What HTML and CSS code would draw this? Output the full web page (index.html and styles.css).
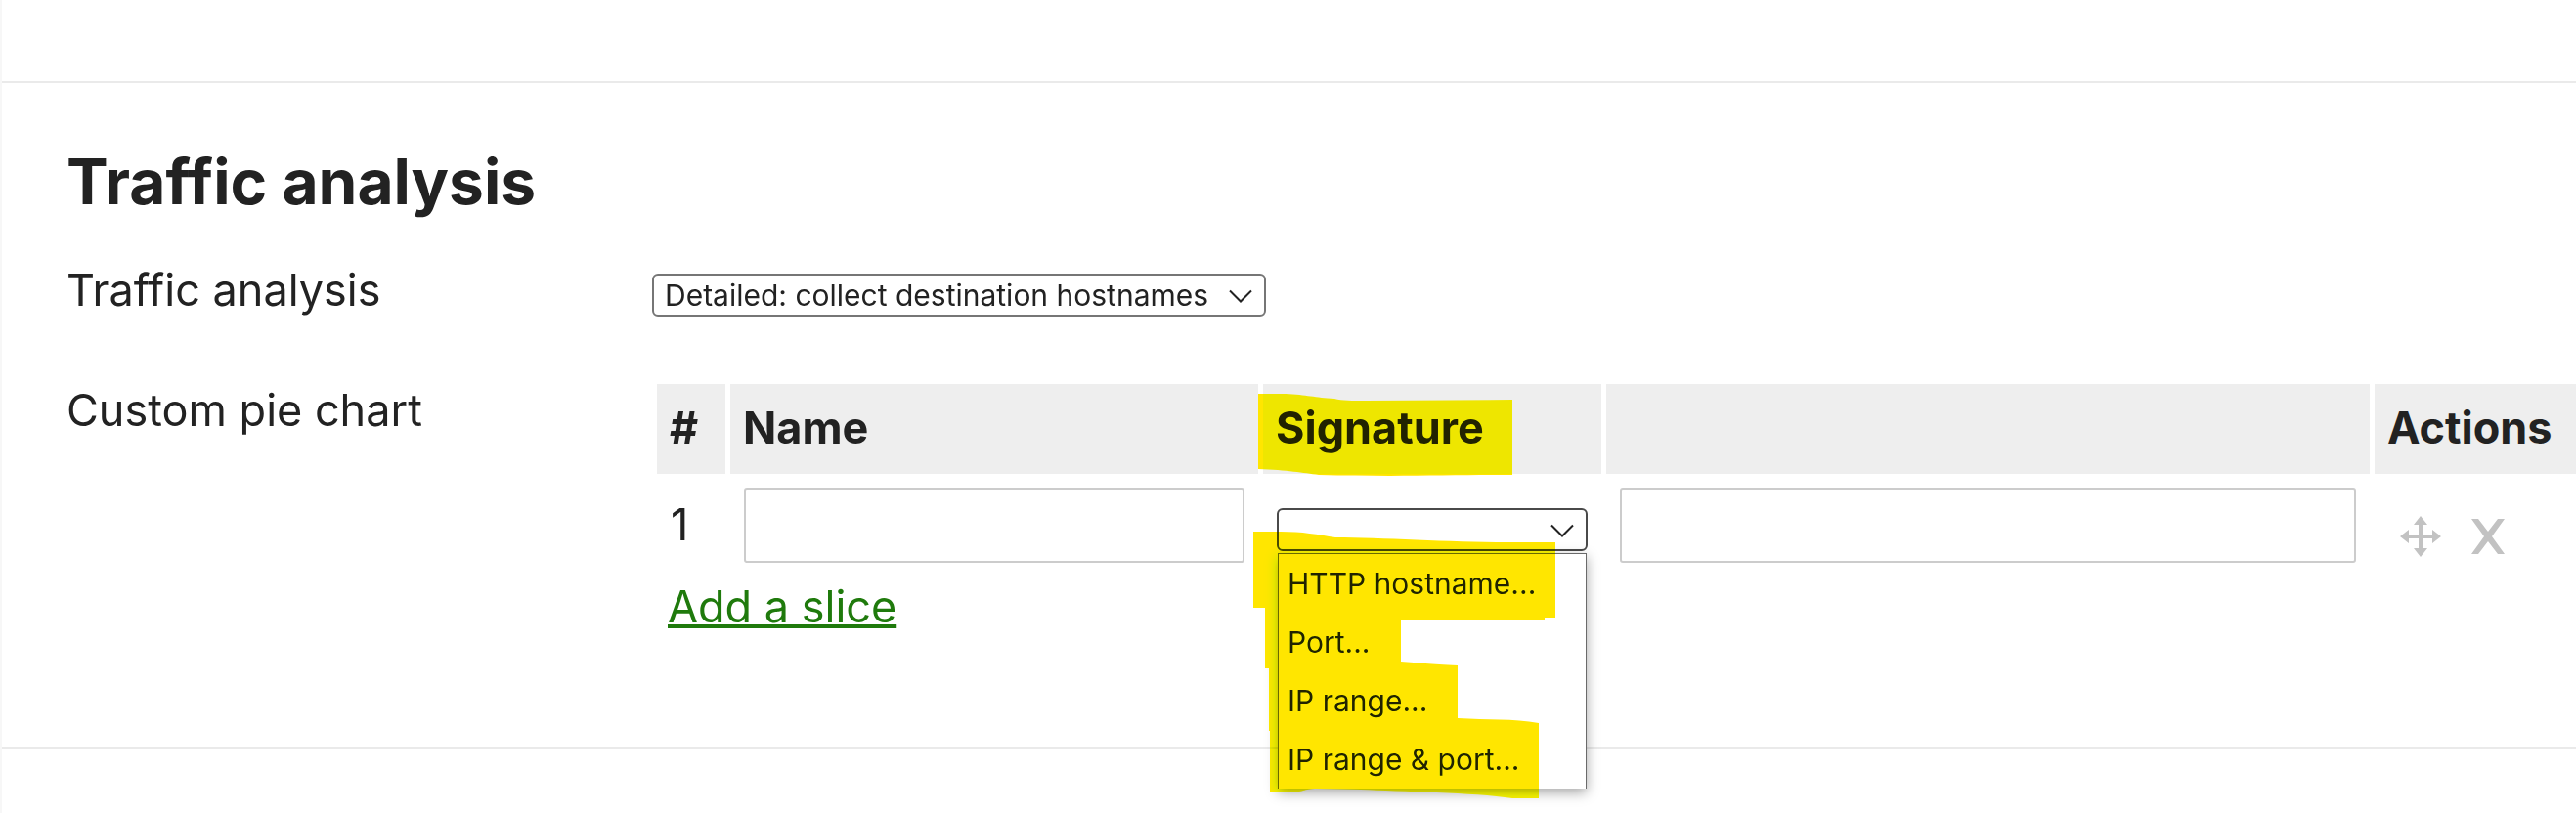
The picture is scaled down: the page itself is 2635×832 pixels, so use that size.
FILE: index.html
```html
<!DOCTYPE html>
<html lang="en">
<head>
    <meta charset="UTF-8">
    <meta name="viewport" content="width=device-width, initial-scale=1.0">
    <title>Traffic analysis</title>
    <link rel="stylesheet" href="styles.css">
</head>
<body>
    <main class="settings">
        <div class="section-previous"></div>

        <section class="section">
            <h2>Traffic analysis</h2>

            <div class="form-row form-row-inline">
                <label for="analysis-mode">Traffic analysis</label>
                <div>
                    <span class="select-box">
                        <select id="analysis-mode">
                            <option>Detailed: collect destination hostnames</option>
                        </select>
                        <svg class="chevron" viewBox="0 0 26 14" aria-hidden="true"><path d="M2 1.5 L13 12.5 L24 1.5"/></svg>
                    </span>
                </div>
            </div>

            <div class="form-row">
                <div class="row-label" id="pie-label">Custom pie chart</div>
                <div>
                    <table class="slices" aria-labelledby="pie-label">
                        <thead>
                            <tr>
                                <th class="col-number">#</th>
                                <th class="col-name">Name</th>
                                <th class="col-signature">
                                    Signature
                                    <svg class="marker marker-title" viewBox="0 0 260 84" aria-hidden="true">
                                        <path d="M0 0 H28 C50 1 58 4 78 5 C86 7 96 7 110 7 L260 6 V83 C200 83 140 85 62 83 C46 81 30 78 0 77 Z"/>
                                    </svg>
                                </th>
                                <th class="col-value"></th>
                                <th class="col-actions">Actions</th>
                            </tr>
                        </thead>
                        <tbody>
                            <tr>
                                <td>1</td>
                                <td><input type="text" aria-label="Name"></td>
                                <td>
                                    <div class="select-box select-open">
                                        <select aria-label="Signature">
                                            <option>&nbsp;</option>
                                        </select>
                                        <svg class="chevron" viewBox="0 0 26 14" aria-hidden="true"><path d="M2 1.5 L13 12.5 L24 1.5"/></svg>
                                        <ul class="menu" role="listbox" aria-label="Signature">
                                            <li role="option">HTTP hostname...</li>
                                            <li role="option">Port...</li>
                                            <li role="option">IP range...</li>
                                            <li role="option">IP range &amp; port...</li>
                                        </ul>
                                        <svg class="marker marker-menu" viewBox="0 0 309 273" aria-hidden="true">
                                            <path d="M0 0 H28 C50 0 66 3 84 6 C130 6 200 11 260 11 H309 V88 H298 V91 H230 C200 91 180 90 151 90 V133 C170 134 180 136 209 137 V191 C240 193 265 191 292 196 V273 H265 C225 267 150 266 110 264 L63 263 C50 264 50 267 35 267 H17 V204 H16 V140 H12 V78 H0 Z"/>
                                        </svg>
                                    </div>
                                </td>
                                <td><input type="text" aria-label="Value"></td>
                                <td class="actions">
                                    <div class="action-buttons">
                                        <button type="button" aria-label="Move">
                                            <svg viewBox="0 0 42 42" width="42" height="42">
                                                <path d="M21 0 L28 9 H23 V19 H33 V14 L42 21 L33 28 V23 H23 V33 H28 L21 42 L14 33 H19 V23 H9 V28 L0 21 L9 14 V19 H19 V9 H14 Z"/>
                                            </svg>
                                        </button>
                                        <button type="button" aria-label="Delete">
                                            <svg viewBox="0 0 42 42" width="42" height="42">
                                                <path d="M4 3 H11 L21 16 L31 3 H38 L25 21 L38 39 H31 L21 26 L11 39 H4 L17 21 Z"/>
                                            </svg>
                                        </button>
                                    </div>
                                </td>
                            </tr>
                        </tbody>
                    </table>
                    <a class="add-slice" href="#">Add a slice</a>
                </div>
            </div>
        </section>
    </main>
</body>
</html>
```

FILE: styles.css
```css
* {
    box-sizing: border-box;
}
body {
    margin: 0;
    overflow: hidden;
    font-family: Inter, sans-serif;
    font-size: 45px;
    font-variant-ligatures: none;
    line-height: 55px;
    color: #222;
    background-color: white;
}
.settings {
    min-height: 100vh;
    border-left: 2px solid #f7f7f7;
}
.section-previous {
    height: 85px;
    border-bottom: 2px solid #eaeaea;
}
.section {
    padding: 62px 0 116px 66px;
    border-bottom: 2px solid #eaeaea;
}
h2 {
    margin: 0 0 44px;
    font-size: 64px;
    line-height: 78px;
    font-weight: bold;
}
.form-row {
    display: grid;
    grid-template-columns: 599px minmax(0, 1fr);
}
.form-row-inline {
    align-items: baseline;
    margin-bottom: 64px;
}
.row-label {
    padding-top: 4px;
}

/* selects */
.select-box {
    display: inline-block;
    position: relative;
}
.select-open {
    display: block;
}
select {
    display: block;
    width: 100%;
    appearance: none;
    height: 44px;
    padding: 0 56px 0 11px;
    border: 2px solid #767676;
    border-radius: 6px;
    background-color: white;
    color: #222;
    font-family: inherit;
    font-size: 30px;
    line-height: 40px;
}
.select-open select {
    border-color: #4a4a4a;
}
.chevron {
    position: absolute;
    top: 16px;
    right: 13px;
    width: 26px;
    height: 14px;
    fill: none;
    stroke: #222;
    stroke-width: 2;
    pointer-events: none;
}
.menu {
    position: absolute;
    top: 46px;
    left: 1px;
    right: 1px;
    margin: 0;
    padding: 0;
    list-style: none;
    border: 1px solid #6a6a6a;
    border-bottom: none;
    background-color: white;
    box-shadow: 0 4px 12px rgba(0,0,0,0.35);
    font-size: 30px;
    line-height: 60px;
}
.menu li {
    padding-left: 9px;
}

/* slices table */
.slices {
    width: calc(100% + 5px);
    table-layout: fixed;
    border-spacing: 5px;
}
th {
    position: relative;
    height: 92px;
    padding: 17px 13px 20px;
    background-color: #eee;
    text-align: left;
    font-weight: bold;
}
td {
    padding: 9px 14px;
    vertical-align: baseline;
}
.col-number {
    width: 70px;
}
.col-name {
    width: 540px;
}
.col-signature {
    width: 346px;
}
.col-actions {
    width: 206px;
}
input {
    display: block;
    width: 100%;
    padding: 8px 9px 10px;
    border: 2px solid #ccc;
    border-radius: 3px;
    background-color: white;
    font-family: inherit;
    font-size: 45px;
    line-height: 55px;
}
.actions {
    padding-top: 38px;
    vertical-align: top;
}
.action-buttons {
    display: flex;
    gap: 15px;
    padding-left: 6px;
}
button {
    display: flex;
    justify-content: center;
    width: 54px;
    padding: 0;
    border: none;
    background: none;
    cursor: pointer;
}
button svg {
    fill: #c2c2c2;
}
.add-slice {
    display: block;
    width: max-content;
    margin: 3px 0 0 16px;
    color: #1f7a0c;
    text-decoration-thickness: 4px;
}

/* highlighter strokes over the signature column */
.marker {
    position: absolute;
    fill: #ffe600;
    mix-blend-mode: darken;
    pointer-events: none;
}
.marker-title {
    top: 10px;
    left: -5px;
    width: 260px;
    height: 84px;
}
.marker-menu {
    top: 24px;
    left: -24px;
    width: 309px;
    height: 273px;
}
```
